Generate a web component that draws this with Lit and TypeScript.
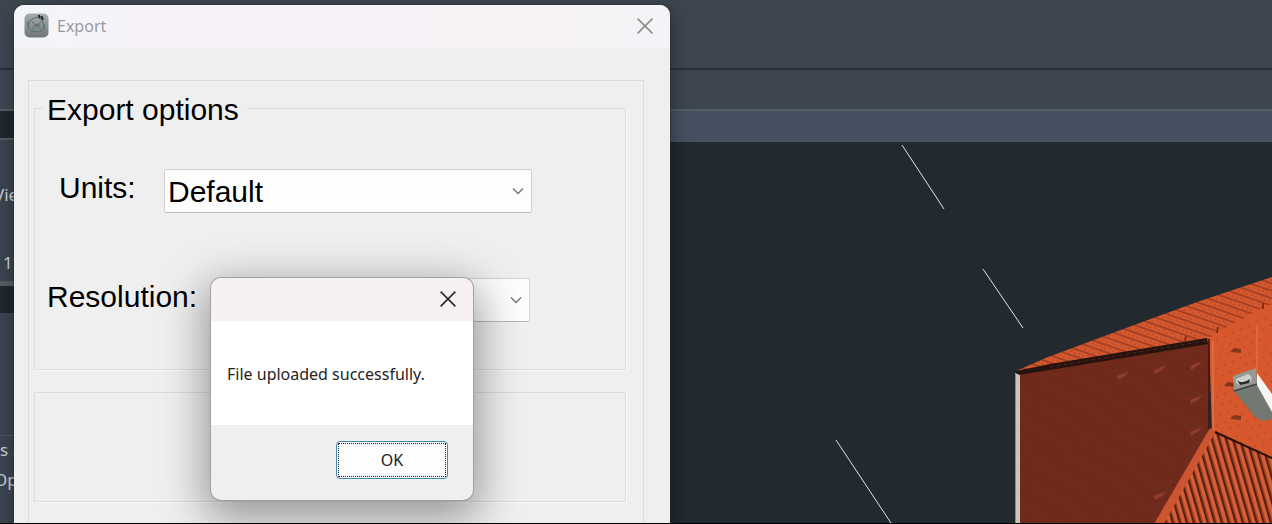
import { LitElement, html, css, svg } from "lit";
import { customElement, property } from "lit/decorators.js";

const chevron = svg`<path d="M1 1.5 L6 6.5 L11 1.5" fill="none" stroke="#777" stroke-width="1.4" />`;

@customElement("close-button")
class CloseButton extends LitElement {
  static styles = css`
    :host {
      display: block;
    }
    .close {
      display: grid;
      place-items: center;
      width: 50px;
      height: 42px;
      padding: 0;
      border: 0;
      background: none;
      color: inherit;
    }
  `;

  render() {
    return html`<button class="close" type="button" aria-label="Close">
      <svg width="16" height="16" viewBox="0 0 16 16" fill="none" stroke="currentColor" stroke-width="1.5">
        <path d="M0.6 0.6 L15.4 15.4 M15.4 0.6 L0.6 15.4" />
      </svg>
    </button>`;
  }
}

@customElement("option-select")
class OptionSelect extends LitElement {
  @property() label = "";
  @property({ type: Array }) options: string[] = [];
  @property({ type: Boolean }) inset = false;

  static styles = css`
    :host {
      display: block;
      font-size: 30px;
    }
    .row {
      display: grid;
      grid-template-columns: 168px minmax(0, 1fr);
      padding-right: 2px;
    }
    .row.inset {
      grid-template-columns: 117px minmax(0, 1fr);
      padding-right: 0;
    }
    .label {
      line-height: 38px;
      white-space: nowrap;
    }
    .inset .label {
      padding-left: 12px;
    }
    .field {
      display: grid;
      grid-template-columns: 1fr 12px 8px;
      align-items: center;
    }
    .select {
      grid-area: 1 / 1 / 2 / 4;
      appearance: none;
      box-sizing: border-box;
      width: 100%;
      height: 44px;
      margin: 0;
      padding: 0 32px 0 3px;
      border: 1px solid #d2d2d2;
      border-bottom-color: #b9b9b9;
      border-radius: 2px;
      background: #fdfdfd;
      color: #000;
      font: inherit;
    }
    .chevron {
      grid-area: 1 / 2;
      pointer-events: none;
    }
  `;

  render() {
    return html`
      <div class="row ${this.inset ? "inset" : ""}">
        <label class="label" for="choice">${this.label}</label>
        <div class="field">
          <select class="select" id="choice">
            ${this.options.map((o) => html`<option>${o}</option>`)}
          </select>
          <svg class="chevron" width="12" height="8" viewBox="0 0 12 8">${chevron}</svg>
        </div>
      </div>
    `;
  }
}

@customElement("roof-scene")
class RoofScene extends LitElement {
  static styles = css`
    :host {
      display: block;
      flex: none;
    }
    .scene {
      display: block;
    }
  `;

  render() {
    const vents = [
      [1117, 375], [1154, 369], [1190, 365], [1190, 399], [1190, 431], [1154, 495],
    ];
    const hatches = [
      [1230, 352], [1224, 386], [1230, 419],
    ];
    return html`<svg class="scene" width="602" height="381" viewBox="670 142 602 381" aria-hidden="true">
      <defs>
        <pattern id="tiles" width="9" height="7" patternUnits="userSpaceOnUse" patternTransform="rotate(19)">
          <rect width="9" height="7" fill="#d5582f" />
          <path d="M0 1 H9" stroke="#8a321a" stroke-width="1.2" />
          <path d="M1 4 H3 M5 5 H7" stroke="#a8421f" stroke-width="1" />
        </pattern>
        <pattern id="specks" width="14" height="11" patternUnits="userSpaceOnUse" patternTransform="rotate(14)">
          <path d="M2 3 h1.5 M9 8 h1.5" stroke="#9c3c1c" stroke-width="1" />
        </pattern>
        <pattern id="grain" width="17" height="14" patternUnits="userSpaceOnUse" patternTransform="rotate(24)">
          <path d="M2 2 h1 M10 8 h1.5" stroke="#521d12" stroke-width="1" />
          <path d="M6 5 h1 M14 11 h1" stroke="#83351f" stroke-width="1" />
        </pattern>
        <pattern id="ribs" width="7" height="20" patternUnits="userSpaceOnUse" patternTransform="skewX(16)">
          <rect width="7" height="20" fill="#c9532d" />
          <rect width="1.8" height="20" fill="#43190e" />
          <rect x="1.8" width="1.2" height="20" fill="#9a3c20" />
          <rect x="4.2" width="1.4" height="20" fill="#db6840" />
        </pattern>
      </defs>

      <g stroke="#dfe3e5" stroke-width="1">
        <path d="M902 145 L944 209" />
        <path d="M983 269 L1023 328" />
        <path d="M836 440 L891 523" />
      </g>

      <polygon points="1016,371 1048,357 1110,334 1145,321 1200,301 1272,277 1272,330 1209,345" fill="url(#tiles)" />
      <polygon points="1209,338 1217,332 1240,320 1262,308 1272,304 1272,460 1212,432" fill="#d8582d" />
      <polygon points="1215,335 1272,309 1272,455 1215,430" fill="url(#specks)" />
      <path d="M1217 333 l1 -6 M1263 309 l0 -6 M1185 341 l1 -5" stroke="#6d2512" stroke-width="1.5" />
      <polygon points="1018,373 1209,342 1210,430 1155,524 1018,524" fill="#702a1c" />
      <polygon points="1020,376 1208,346 1208,430 1153,524 1020,524" fill="url(#grain)" />
      <polygon points="1016,371 1050,364 1207,338 1208,344 1050,370 1018,375" fill="#26130f" />
      <path d="M1050 367 L1205 341" stroke="#5a2417" stroke-width="1" stroke-dasharray="3 4" />
      <path d="M1209 339 V430" stroke="#3a170e" stroke-width="1.5" />
      <path d="M1213 341 V430" stroke="#e06a40" stroke-width="2" />
      <path d="M1257 325 V372" stroke="#e4774f" stroke-width="1" />

      <polygon points="1213,430 1272,457 1272,524 1158,524" fill="url(#ribs)" />
      <polygon points="1210,428 1216,431 1164,524 1154,524" fill="#cb5530" />
      <path d="M1215 432 L1272 458" stroke="#2b120b" stroke-width="2" />

      ${vents.map(
        ([x, y]) => svg`<path d="M${x} ${y + 1} L${x + 12} ${y - 4} L${x + 8} ${y + 1} L${x + 1} ${y + 5} Z" fill="#8f3d29" />`,
      )}
      ${hatches.map(
        ([x, y]) => svg`<path d="M${x} ${y} L${x + 4} ${y - 4} L${x + 11} ${y - 3} L${x + 11} ${y + 1} Z" fill="#87341d" />`,
      )}

      <polygon points="1234,391 1257,384 1272,411 1272,419 1263,421 1255,417" fill="#727872" />
      <polygon points="1257,373 1272,394 1272,412 1257,385" fill="#f6f7f4" />
      <polygon points="1233,376 1256,368 1257,384 1234,391" fill="#949993" />
      <path d="M1234 391 L1257 384" stroke="#3b413c" stroke-width="1.5" />
      <path d="M1236 379 L1248 374 Q1254 377 1250 382 L1240 385 Q1235 384 1236 379 Z" fill="#ced1cb" />
      <path d="M1237 380 Q1242 385 1250 379 L1249 383 L1240 385 Z" fill="#242a27" />

      <path d="M1015 373 L1020 375 V524 H1015 Z" fill="#cbc3bf" />
      <path d="M1015.5 374 V524" stroke="#8c8a88" stroke-width="1" />
    </svg>`;
  }
}

@customElement("app-root")
class AppRoot extends LitElement {
  static styles = css`
    :host {
      display: block;
      font-family: "Liberation Sans", Arial, sans-serif;
      color: #000;
    }
    .desktop {
      position: relative;
      display: grid;
      grid-template-rows: auto auto 1fr;
      box-sizing: border-box;
      height: 100vh;
      overflow: hidden;
      border-bottom: 1px solid #000;
      background: #3d4650;
    }
    .ribbon {
      height: 68px;
      border-bottom: 2px solid #28313c;
    }
    .tabs {
      height: 39px;
      border-bottom: 2px solid #525d67;
    }
    .workspace {
      display: grid;
      grid-template-columns: 14px 1fr;
      min-height: 0;
    }
    .palette {
      overflow: hidden;
      background: #3b434f;
      color: #c9cdd2;
      font: 17px/24px "Noto Sans", sans-serif;
      white-space: nowrap;
    }
    .palette-head,
    .palette-split {
      height: 27px;
      border-bottom: 2px solid #535c66;
      background: #20272d;
    }
    .palette-split {
      border-top: 5px solid #535c66;
      border-bottom: 0;
    }
    .palette-group {
      display: flex;
      flex-direction: column;
      justify-content: flex-end;
      box-sizing: border-box;
      height: 141px;
      padding-bottom: 6px;
      gap: 44px;
    }
    .palette-list {
      display: flex;
      flex-direction: column;
      gap: 6px;
      margin-top: 122px;
      padding-top: 2px;
      border-top: 1px solid #4b545e;
    }
    .scrolled {
      margin-left: -6px;
    }
    .value {
      padding-left: 3px;
    }
    .view {
      display: flex;
      flex-direction: column;
      min-width: 0;
      overflow: hidden;
      background: #22292f;
    }
    .view-tabs {
      flex: none;
      height: 31px;
      background: #455060;
    }
    .canvas {
      display: flex;
      justify-content: flex-end;
    }
    .window {
      position: absolute;
      top: 5px;
      left: 14px;
      width: 656px;
      overflow: hidden;
      border-radius: 10px 10px 0 0;
      background: #efefef;
      box-shadow: 0 0 2px #22262b, 2px 4px 18px rgba(0, 0, 0, 0.35);
    }
    .titlebar {
      display: flex;
      align-items: center;
      justify-content: space-between;
      box-sizing: border-box;
      height: 43px;
      padding-bottom: 2px;
      background: linear-gradient(90deg, #f3f5fa, #f7f2f7 25%, #f6f1f5 70%, #f4f3f6);
      color: #8b8b8b;
    }
    .title {
      display: flex;
      align-items: center;
      gap: 8px;
      margin: 0;
      padding-left: 10px;
      color: #9b9a9e;
      font: 16px/24px "Noto Sans", sans-serif;
    }
    .body {
      padding: 32px 26px 0 14px;
    }
    .panel {
      display: flex;
      flex-direction: column;
      gap: 22px;
      padding: 10px 17px 48px 5px;
      border: 1px solid #dcdcdc;
    }
    .group {
      min-width: 0;
      margin: 0;
      padding: 43px 7px 47px 8px;
      border: 1px solid #dcdcdc;
      box-shadow: 1px 1px 0 #f8f8f8;
    }
    .legend {
      padding: 2px 8px 0 4px;
      font-size: 30px;
      line-height: 33px;
    }
    .options {
      display: grid;
      gap: 65px;
      max-width: 485px;
      padding-left: 4px;
    }
    .empty {
      height: 108px;
      padding: 0;
    }
    .message {
      position: absolute;
      top: 278px;
      left: 211px;
      width: 262px;
      overflow: hidden;
      border-radius: 10px;
      background: #efefef;
      box-shadow: 0 0 0 1px #a3a0a3, 0 12px 44px 6px rgba(0, 0, 0, 0.38);
      font: 16px/24px "Noto Sans", sans-serif;
      color: #242424;
    }
    .message-title {
      display: flex;
      justify-content: flex-end;
      height: 43px;
      background: #f6eff4;
    }
    .message-text {
      margin: 0;
      padding: 41px 16px 39px;
      background: #fff;
    }
    .message-actions {
      display: flex;
      justify-content: flex-end;
      padding: 16px 25px 21px;
    }
    .ok {
      width: 112px;
      height: 38px;
      padding: 1px;
      border: 1px solid #3f8ab0;
      border-radius: 4px;
      background: #fdfdfd;
      color: #1c1c1c;
      font: inherit;
    }
    .ok-focus {
      display: block;
      border: 1px dotted #222;
      line-height: 32px;
    }
  `;

  render() {
    return html`
      <main class="desktop">
        <div class="ribbon"></div>
        <div class="tabs"></div>
        <div class="workspace">
          <aside class="palette">
            <div class="palette-head"></div>
            <div class="palette-group">
              <span class="scrolled">View</span>
              <span class="value">1</span>
            </div>
            <div class="palette-split"></div>
            <div class="palette-list">
              <span>s ...</span>
              <span class="scrolled">Op</span>
            </div>
          </aside>
          <div class="view">
            <div class="view-tabs"></div>
            <div class="canvas"><roof-scene></roof-scene></div>
          </div>
        </div>

        <section class="window" aria-label="Export">
          <header class="titlebar">
            <h1 class="title">
              <svg width="25" height="25" viewBox="0 0 25 25" fill="none" aria-hidden="true">
                <defs>
                  <linearGradient id="badge" x1="0" y1="0" x2="0" y2="1">
                    <stop offset="0" stop-color="#a9adad" />
                    <stop offset="1" stop-color="#6f7474" />
                  </linearGradient>
                </defs>
                <rect x="0.5" y="0.5" width="24" height="24" rx="5" fill="url(#badge)" />
                <path d="M6 8 Q12 2 17 6 L20 12 Q20 18 15 19 L8 18 Q3 15 5 10 Z" stroke="#4f7476" stroke-width="1" />
                <path d="M8 9 L17 16 M17 9 L8 16 M10 12 H16" stroke="#5b6568" stroke-width="0.9" />
                <path d="M14.5 2 L16 5 M17.5 3 L19 7" stroke="#1d2b2d" stroke-width="2" />
                <path d="M4 8 V14 M20 11 V16" stroke="#3f7072" stroke-width="1" />
              </svg>
              Export
            </h1>
            <close-button></close-button>
          </header>
          <div class="body">
            <div class="panel">
              <fieldset class="group">
                <legend class="legend">Export options</legend>
                <div class="options">
                  <option-select label="Units:" .options=${["Default"]} inset></option-select>
                  <option-select label="Resolution:" .options=${[""]}></option-select>
                </div>
              </fieldset>
              <div class="group empty"></div>
            </div>
          </div>
        </section>

        <section class="message" role="alertdialog" aria-describedby="message-text">
          <header class="message-title"><close-button></close-button></header>
          <p class="message-text" id="message-text">File uploaded successfully.</p>
          <footer class="message-actions">
            <button class="ok" type="button"><span class="ok-focus">OK</span></button>
          </footer>
        </section>
      </main>
    `;
  }
}
